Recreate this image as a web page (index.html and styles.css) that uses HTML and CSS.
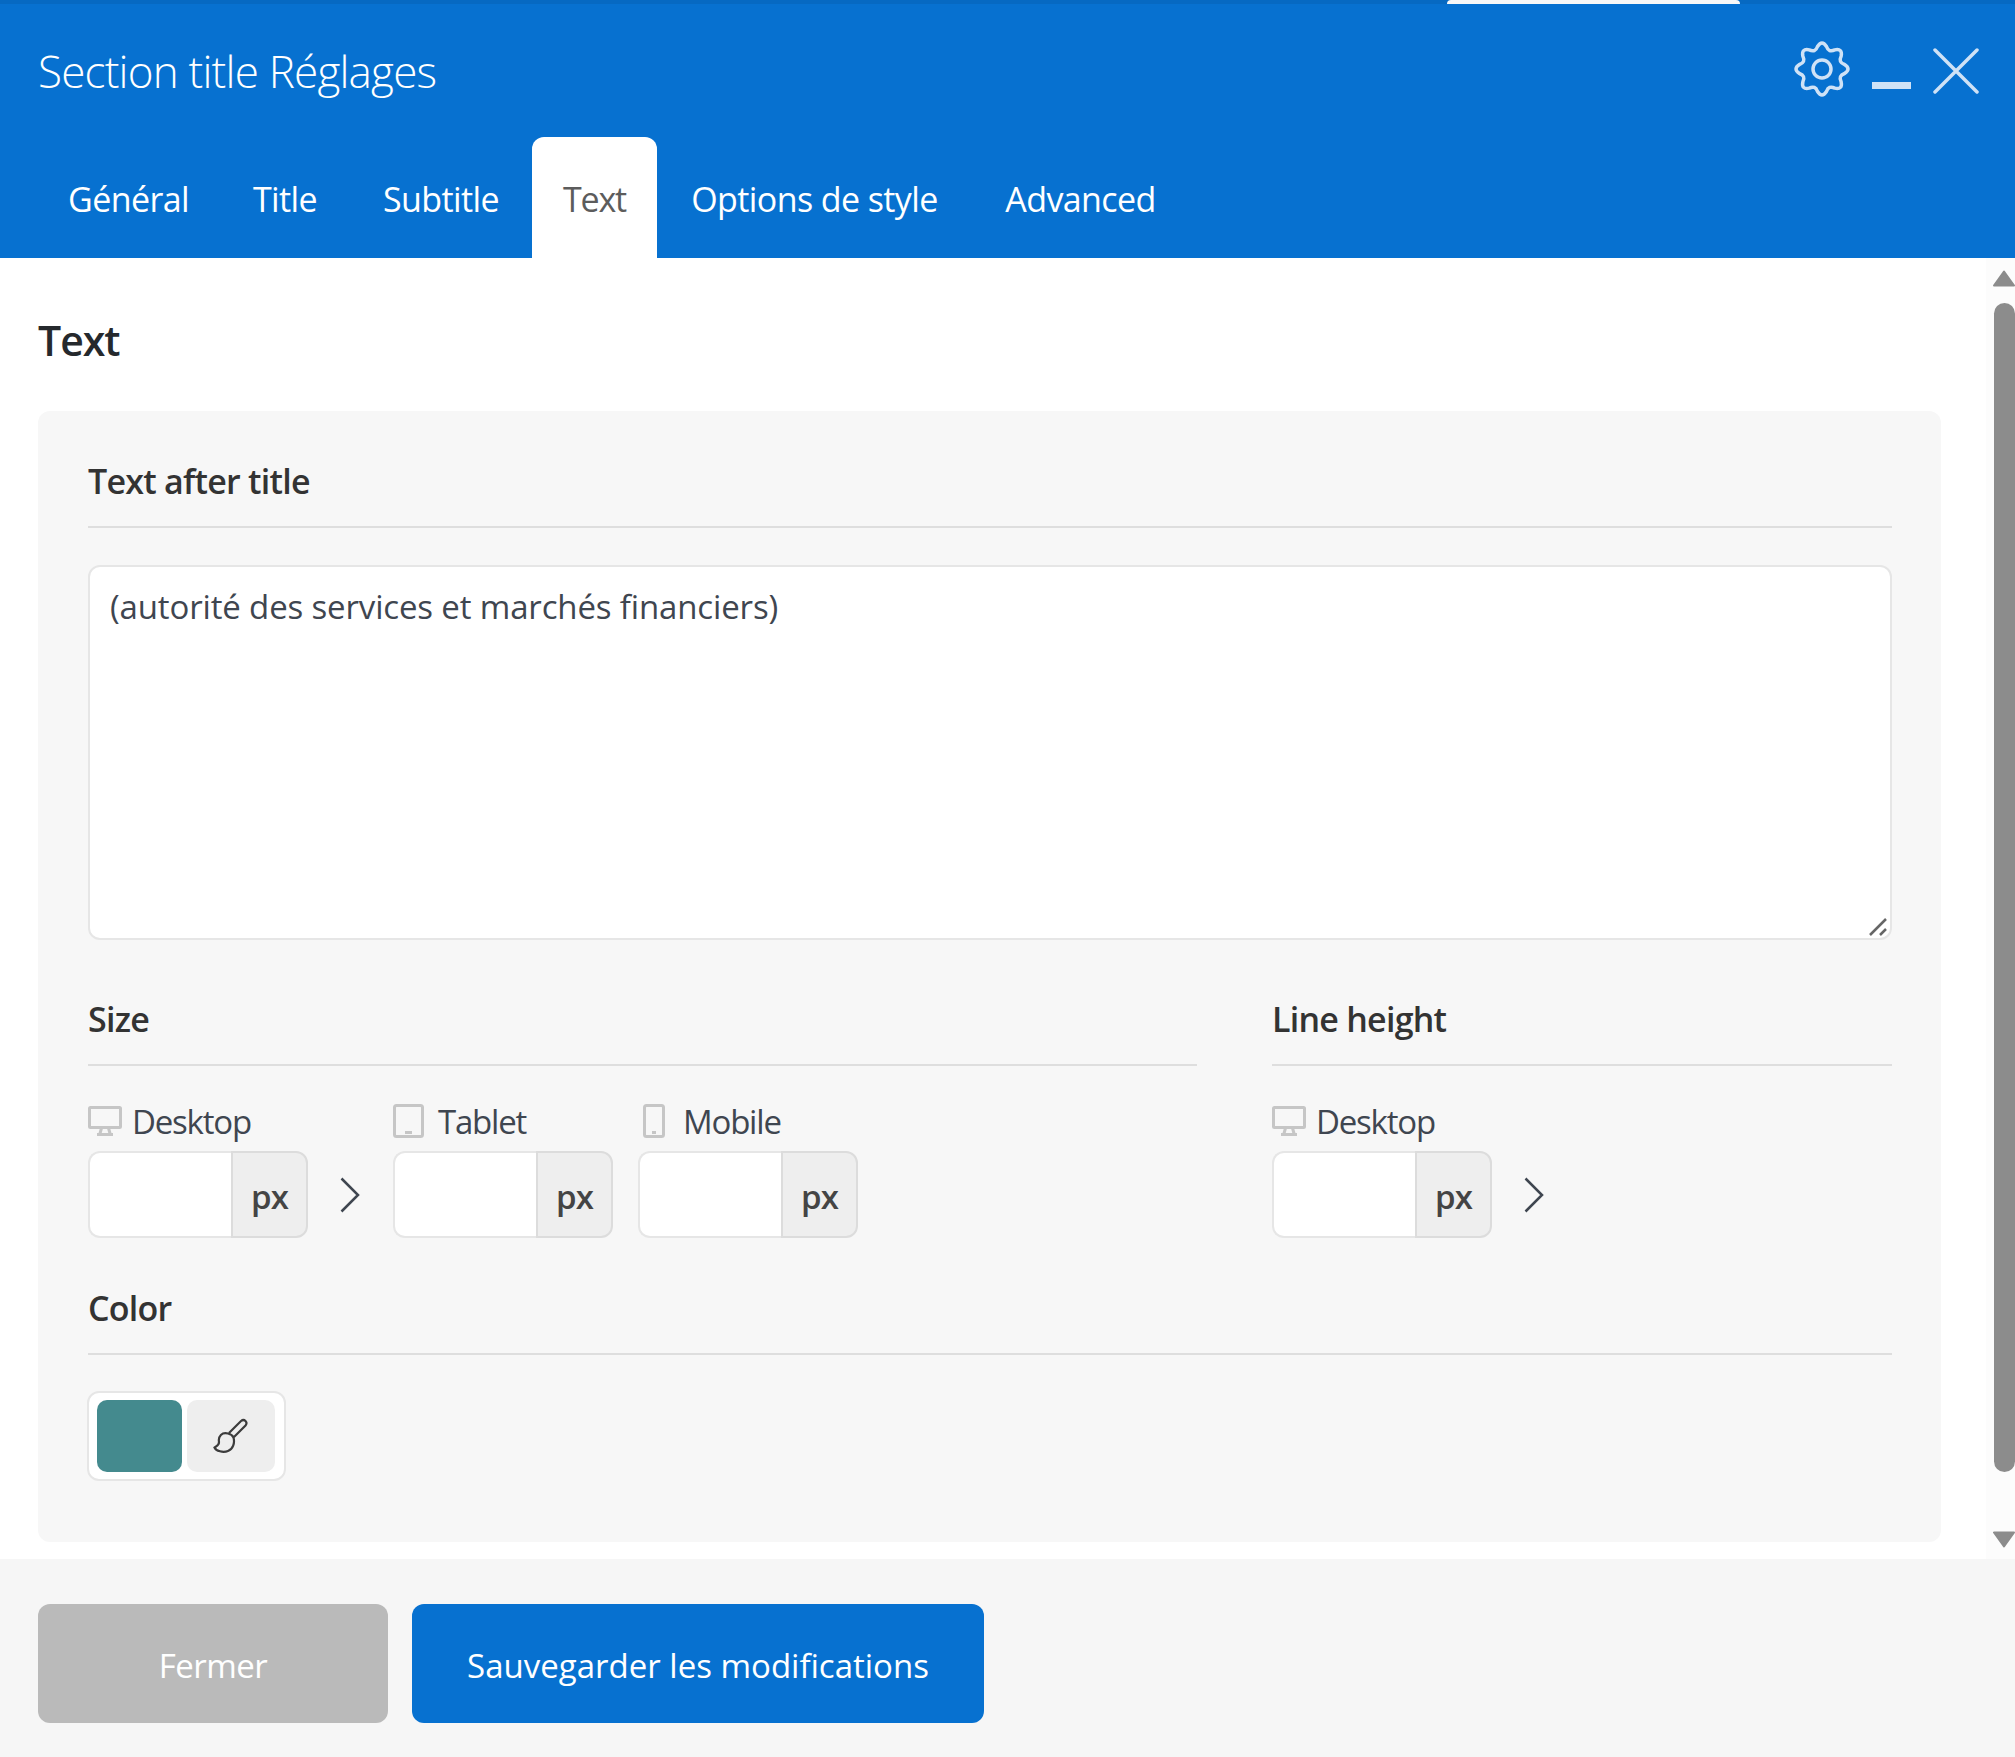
FILE: index.html
```html
<!DOCTYPE html>
<html>
<head>
	<title>Section title Réglages</title>
	<meta charset="utf-8">
	<link rel="stylesheet" href="styles.css">
</head>
<body>
	<div class="modal">
		<!-- top bar -->
		<div class="header">
			<div class="strip"><div class="strip_tab"></div></div>
			<div class="title_row">
				<div class="title">Section title Réglages</div>
				<svg class="gear" viewBox="-28 -28 56 56"><path d="M22.56 -4.49Q29.44 0 22.56 4.49Q16.11 6.67 19.12 12.78Q20.82 20.82 12.78 19.12Q6.67 16.11 4.49 22.56Q0 29.44 -4.49 22.56Q-6.67 16.11 -12.78 19.12Q-20.82 20.82 -19.12 12.78Q-16.11 6.67 -22.56 4.49Q-29.44 0 -22.56 -4.49Q-16.11 -6.67 -19.12 -12.78Q-20.82 -20.82 -12.78 -19.12Q-6.67 -16.11 -4.49 -22.56Q0 -29.44 4.49 -22.56Q6.67 -16.11 12.78 -19.12Q20.82 -20.82 19.12 -12.78Q16.11 -6.67 22.56 -4.49Z"/><circle r="9"/></svg>
				<div class="minimize"></div>
				<svg class="close" viewBox="0 0 46 46"><path d="M2 2L44 44M44 2L2 44"/></svg>
			</div>
			<div class="tabs">
				<div class="tab">Général</div>
				<div class="tab">Title</div>
				<div class="tab">Subtitle</div>
				<div class="tab active">Text</div>
				<div class="tab">Options de style</div>
				<div class="tab">Advanced</div>
			</div>
		</div>
		<!-- scrolling content -->
		<div class="body_row">
			<div class="content">
				<h2 class="heading">Text</h2>
				<div class="card">
					<div class="section_title">Text after title</div>
					<div class="text_box">
						(autorité des services et marchés financiers)
						<svg class="grip" viewBox="0 0 18 18"><path d="M1 17L17 1M11 17L17 11"/></svg>
					</div>
					<div class="columns">
						<div class="col_size">
							<div class="section_title">Size</div>
							<div class="fields">
								<div class="field">
									<div class="field_label">
										<svg class="ico ico_desktop" viewBox="0 0 34 30"><path d="M2.500 1.500H31.500Q32.500 1.500 32.500 2.500V20.500Q32.500 21.500 31.500 21.500H2.500Q1.500 21.500 1.500 20.500V2.500Q1.500 1.500 2.500 1.500ZM13.500 22L12 27.500M20.500 22L22 27.500M9 28.500H25"/></svg>
										Desktop
									</div>
									<div class="input_group"><input class="num" type="text"><span class="unit">px</span></div>
								</div>
								<svg class="chevron" viewBox="0 0 20 36"><path d="M1.500 1.500L18 18L1.500 34.500"/></svg>
								<div class="field">
									<div class="field_label">
										<svg class="ico ico_tablet" viewBox="0 0 31 34"><path d="M3.500 1.500H27.500Q29.500 1.500 29.500 3.500V30.500Q29.500 32.500 27.500 32.500H3.500Q1.500 32.500 1.500 30.500V3.500Q1.500 1.500 3.500 1.500ZM12 28.500H19"/></svg>
										Tablet
									</div>
									<div class="input_group"><input class="num" type="text"><span class="unit">px</span></div>
								</div>
								<div class="field field_mobile">
									<div class="field_label">
										<svg class="ico ico_mobile" viewBox="0 0 22 34"><path d="M3.500 1.500H18.500Q20.500 1.500 20.500 3.500V30.500Q20.500 32.500 18.500 32.500H3.500Q1.500 32.500 1.500 30.500V3.500Q1.500 1.500 3.500 1.500ZM9 28.500H13"/></svg>
										Mobile
									</div>
									<div class="input_group"><input class="num" type="text"><span class="unit">px</span></div>
								</div>
							</div>
						</div>
						<div class="col_line">
							<div class="section_title">Line height</div>
							<div class="fields">
								<div class="field">
									<div class="field_label">
										<svg class="ico ico_desktop" viewBox="0 0 34 30"><path d="M2.500 1.500H31.500Q32.500 1.500 32.500 2.500V20.500Q32.500 21.500 31.500 21.500H2.500Q1.500 21.500 1.500 20.500V2.500Q1.500 1.500 2.500 1.500ZM13.500 22L12 27.500M20.500 22L22 27.500M9 28.500H25"/></svg>
										Desktop
									</div>
									<div class="input_group"><input class="num" type="text"><span class="unit">px</span></div>
								</div>
								<svg class="chevron" viewBox="0 0 20 36"><path d="M1.500 1.500L18 18L1.500 34.500"/></svg>
							</div>
						</div>
					</div>
					<div class="section_title color_title">Color</div>
					<div class="color_box">
						<div class="swatch"></div>
						<div class="brush_btn">
							<svg class="brush" viewBox="0 0 36 36"><path d="M16 15L28 3Q30.500 1 32.500 3Q34.500 5 32.500 7.500L20.500 19.500M15 15.500C9 14 5 18 6 24C6 28 3 28 1.500 29.500C3 33 10 35 15 33C20 31 22 25 20.500 19.500C19.500 17 17.500 16 15 15.500Z"/></svg>
						</div>
					</div>
				</div>
			</div>
			<!-- scrollbar -->
			<div class="scrollbar">
				<svg class="arrow arrow_up" viewBox="0 0 22 17"><path d="M11 1.500L21 15.500H1Z"/></svg>
				<div class="thumb"></div>
				<svg class="arrow arrow_down" viewBox="0 0 22 17"><path d="M1 1.500H21L11 15.500Z"/></svg>
			</div>
		</div>
		<!-- buttons -->
		<div class="footer">
			<button type="button" class="btn btn_close">Fermer</button>
			<button type="button" class="btn btn_save">Sauvegarder les modifications</button>
		</div>
	</div>
</body>
</html>
```

FILE: styles.css
```css
* {
	box-sizing: border-box;
}
body {
	margin: 0;
	background: #fff;
	font-family: "Open Sans", "Noto Sans", "Liberation Sans", sans-serif;
	color: #3f4650;
}
.modal {
	width: 2015px;
	height: 1757px;
	display: flex;
	flex-direction: column;
	overflow: hidden;
}
.header {
	height: 258px;
	background: #0771d0;
	color: #fff;
	flex: none;
}
.strip {
	height: 4px;
	background: #0669c2;
	padding-left: 1447px;
}
.strip_tab {
	width: 293px;
	height: 4px;
	background: #f8f8f8;
	border-radius: 10px 10px 0 0;
}
.title_row {
	height: 133px;
	display: flex;
	align-items: flex-start;
	padding-left: 38px;
}
.title {
	flex: 1;
	font-size: 44px;
	font-weight: 300;
	letter-spacing: -0.8px;
	line-height: 56px;
	margin-top: 39px;
}
.gear {
	width: 56px;
	height: 56px;
	margin-top: 37px;
	fill: none;
	stroke: #cfe2f6;
	stroke-width: 3.5;
}
.minimize {
	width: 39px;
	height: 7px;
	margin: 78px 0 0 22px;
	background: #cfe2f6;
}
.close {
	width: 46px;
	height: 46px;
	margin: 44px 36px 0 22px;
	fill: none;
	stroke: #cfe2f6;
	stroke-width: 3.5;
	stroke-linecap: round;
}
.tabs {
	height: 120px;
	display: grid;
	grid-template-columns: 183px 130px 182px 125px 315px 217px;
	padding-left: 37px;
}
.tab {
	margin-bottom: 1px;
	text-align: center;
	font-size: 34px;
	letter-spacing: -0.6px;
	line-height: 124px;
}
.tab.active {
	background: #fff;
	color: #5c5c5c;
	border-radius: 12px 12px 0 0;
	letter-spacing: -1.2px;
}
.body_row {
	flex: 1;
	display: flex;
	min-height: 0;
}
.content {
	width: 1986px;
	padding: 0 45px 0 38px;
	overflow: hidden;
}
.heading {
	margin: 0;
	height: 153px;
	font-size: 41px;
	font-weight: 600;
	letter-spacing: -1px;
	line-height: 164px;
	color: #25292d;
}
.card {
	height: 1131px;
	background: #f7f7f7;
	border-radius: 12px;
	padding: 40px 49px 0 50px;
}
.section_title {
	height: 77px;
	border-bottom: 2px solid #dedede;
	font-size: 34px;
	font-weight: 600;
	letter-spacing: -0.75px;
	line-height: 60px;
	color: #333;
}
.text_box {
	position: relative;
	height: 375px;
	margin-top: 37px;
	padding: 18px 20px;
	background: #fff;
	border: 2px solid #e6e6e6;
	border-radius: 12px;
	font-size: 33px;
	letter-spacing: -0.15px;
	line-height: 44px;
}
.grip {
	position: absolute;
	right: 3px;
	bottom: 2px;
	width: 18px;
	height: 18px;
	fill: none;
	stroke: #666;
	stroke-width: 2.5;
}
.columns {
	display: flex;
	justify-content: space-between;
	margin-top: 49px;
}
.col_size {
	width: 1109px;
}
.col_line {
	width: 620px;
}
.fields {
	display: flex;
	align-items: flex-start;
	margin-top: 37px;
}
.field {
	width: 220px;
}
.field_mobile {
	margin-left: 25px;
}
.field_label {
	height: 48px;
	padding-bottom: 12px;
	display: flex;
	align-items: center;
	white-space: nowrap;
	font-size: 33px;
	letter-spacing: -1.2px;
}
.ico {
	flex: none;
	fill: none;
	stroke: #c6c6c6;
	stroke-width: 3;
}
.ico_desktop {
	width: 34px;
	height: 30px;
	margin-right: 10px;
}
.ico_tablet {
	width: 31px;
	height: 34px;
	margin-right: 14px;
}
.ico_mobile {
	width: 22px;
	height: 34px;
	margin: 0 18px 0 5px;
}
.input_group {
	display: flex;
	height: 87px;
}
.num {
	width: 143px;
	height: 87px;
	border: 2px solid #e6e6e6;
	border-right: 0;
	border-radius: 12px 0 0 12px;
	background: #fff;
	outline: 0;
}
.unit {
	flex: 1;
	background: #eee;
	border: 2px solid #dcdcdc;
	border-radius: 0 12px 12px 0;
	text-align: center;
	font-size: 33px;
	font-weight: 600;
	letter-spacing: -0.8px;
	line-height: 88px;
	color: #444;
}
.chevron {
	width: 20px;
	height: 36px;
	margin: 74px 33px 0 32px;
	fill: none;
	stroke: #3f4650;
	stroke-width: 2.5;
}
.color_title {
	margin-top: 40px;
}
.color_box {
	display: flex;
	align-items: center;
	width: 199px;
	height: 90px;
	margin: 36px 0 0 -1px;
	padding-left: 8px;
	background: #fff;
	border: 2px solid #e6e6e6;
	border-radius: 12px;
}
.swatch {
	width: 85px;
	height: 72px;
	background: #448a8e;
	border-radius: 10px;
}
.brush_btn {
	width: 88px;
	height: 72px;
	margin-left: 5px;
	background: #eee;
	border-radius: 10px;
	display: flex;
	align-items: center;
	justify-content: center;
}
.brush {
	width: 36px;
	height: 36px;
	fill: none;
	stroke: #3c3c3c;
	stroke-width: 2.2;
}
.scrollbar {
	width: 29px;
	background: #fcfcfc;
	padding: 12px 0 0 7px;
}
.arrow {
	display: block;
	width: 22px;
	height: 17px;
	fill: #8c8c8c;
	stroke: #8c8c8c;
	stroke-width: 2;
	stroke-linejoin: round;
}
.thumb {
	width: 21px;
	height: 1169px;
	margin: 16px 0 0 1px;
	background: #8c8c8c;
	border-radius: 11px;
}
.arrow_down {
	margin-top: 59px;
}
.footer {
	height: 198px;
	flex: none;
	background: #f6f6f6;
	display: flex;
	align-items: flex-start;
	padding: 45px 0 0 38px;
}
.btn {
	height: 119px;
	padding: 3px 0 0;
	border: 0;
	border-radius: 12px;
	color: #fff;
	font-family: inherit;
	font-size: 33px;
	letter-spacing: 0;
}
.btn_close {
	width: 350px;
	background: #bababa;
	letter-spacing: -0.5px;
}
.btn_save {
	width: 572px;
	margin-left: 24px;
	background: #0771d0;
}
```
